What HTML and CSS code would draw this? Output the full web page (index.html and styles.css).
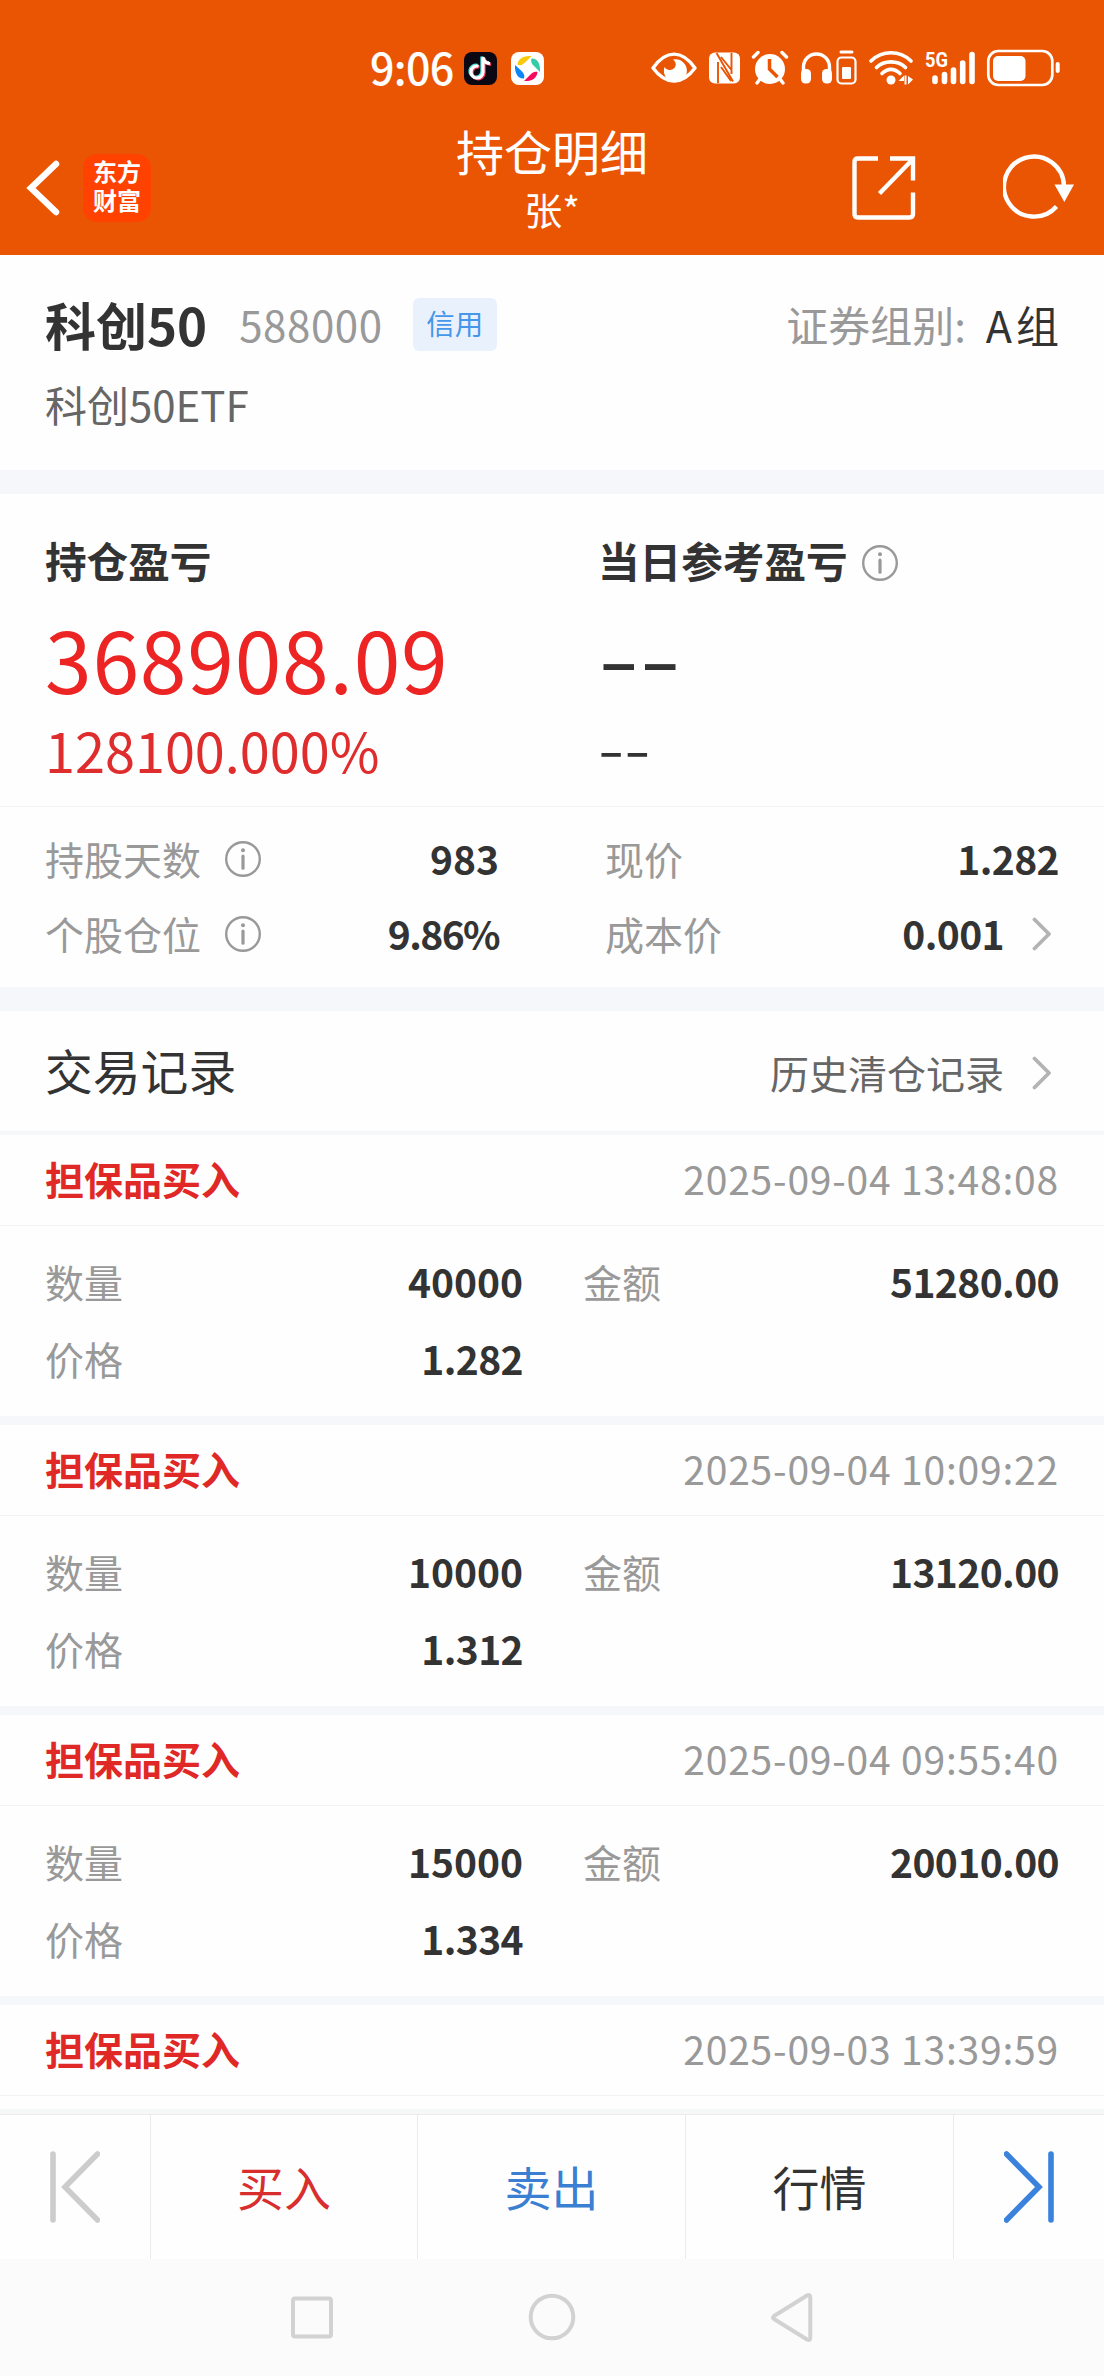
FILE: index.html
```html
<!DOCTYPE html>
<html lang="zh-CN">
<head>
<meta charset="utf-8">
<title>持仓明细</title>
<link rel="stylesheet" href="styles.css">
</head>
<body>
<svg class="defs" width="0" height="0">
  <symbol id="info" viewBox="0 0 36 36">
    <circle cx="18" cy="18" r="16.8" fill="none" stroke="#999" stroke-width="2.4"/>
    <circle cx="18" cy="9.3" r="2" fill="#999"/>
    <path d="M18 15.2V27.2" stroke="#999" stroke-width="3.2" stroke-linecap="round"/>
  </symbol>
  <symbol id="more" viewBox="0 0 20 34">
    <path d="M2.5 2.5L17 17L2.5 31.5" fill="none" stroke="#b3b3b3" stroke-width="3.8" stroke-linecap="round" stroke-linejoin="round"/>
  </symbol>
</svg>
<header class="header">
  <div class="status">
    <span class="clock">9:06</span>
    <svg class="app-icon" viewBox="0 0 33 33">
      <rect width="33" height="33" rx="8" fill="#0b0713"/>
      <g fill="none" stroke-width="3.2">
        <path d="M15 14.200a6 6 0 1 0 4.500 6V5.200c.5 4 3 6 7 6.300" stroke="#4fd9d8" transform="translate(-1.600 -.8)"/>
        <path d="M15 14.200a6 6 0 1 0 4.500 6V5.200c.5 4 3 6 7 6.300" stroke="#ee3a5c" transform="translate(.6 .8)"/>
        <path d="M15 14.200a6 6 0 1 0 4.500 6V5.200c.5 4 3 6 7 6.300" stroke="#fff" transform="translate(-.5 0)"/>
      </g>
    </svg>
    <svg class="app-icon app-icon-last" viewBox="0 0 33 33">
      <rect width="33" height="33" rx="8" fill="#fff"/>
      <path d="M6.500 12.500C7 7 12 3.200 20.500 4.200L14.500 10C12 13 9 14 6.500 12.500z" fill="#fbc90c"/>
      <path d="M20.500 6.500C26 6 29.500 11 29 20L23 14C20.500 11.500 19.500 9.500 20.500 6.500z" fill="#35cca8"/>
      <path d="M26.500 20C26 26 21 29.500 13 29L18.500 23.500C21 20.500 24 19 26.500 20z" fill="#f50a5e"/>
      <path d="M4 13L9.500 18C13 21 14 23.500 13 26.500C7 27 3.500 21.500 4 13z" fill="#0a86f8"/>
    </svg>
    <svg class="status-icons" viewBox="0 0 412 40" fill="none" stroke="#fff">
      <path d="M3 20C16 1.500 32 1.500 45 20C32 37.500 16 37.500 3 20z" stroke-width="3.4" stroke-linejoin="round"/>
      <path d="M23 11.500A11.500 11.500 0 1 1 14.500 19C17 23.500 24 22.500 25.500 18C26.500 15.500 25 13 23 11.500z" fill="#fff" stroke="none"/>
      <rect x="59" y="4.500" width="31" height="31" rx="6" fill="#fff" stroke="none"/>
      <path d="M68 14V35M66.500 5L83 33.500M81.500 5V26M71 19L81 33M71 9L81.500 22" stroke="#ea5504" stroke-width="1.900"/>
      <circle cx="120" cy="21" r="15" fill="#fff" stroke="none"/>
      <path d="M103.500 9L108 4.500M136.500 9L132 4.500M107 35L110 31M133 35L130 31" stroke-width="3.400" stroke-linecap="round"/>
      <path d="M119.500 11V21L127.500 29" stroke="#ea5504" stroke-width="3.500"/>
      <path d="M153.500 27V19A13 13 0 0 1 179.500 19V27" stroke-width="3.400"/>
      <rect x="151" y="21" width="10" height="14.500" rx="4.500" fill="#fff" stroke="none"/>
      <rect x="172" y="21" width="10" height="14.500" rx="4.500" fill="#fff" stroke="none"/>
      <rect x="187.500" y="9.500" width="18" height="26" rx="4" stroke-width="2.200"/>
      <path d="M191 4H202" stroke-width="3" stroke-linecap="round"/>
      <rect x="192" y="19" width="9" height="12" rx="1" fill="#fff" stroke="none"/>
      <path d="M221 13C232 2 250 2 261 13M226.500 19.500C234 12 248 12 255.500 19.500M232 25.500C237.500 20 244.500 20 250 25.500" stroke-width="3.700" stroke-linecap="round"/>
      <circle cx="241" cy="32" r="4.500" fill="#fff" stroke="none"/>
      <path d="M254 27.500L248.500 33H254zM258 36.500V28L263 31.500z" fill="#fff" stroke="none"/>
      <path d="M255.500 27.500V36.500" stroke-width="2"/>
      <text class="net" x="275" y="19" textLength="23" lengthAdjust="spacingAndGlyphs">5G</text>
      <path d="M285 30V33.500M294.500 26.500V33.500M303.500 22V33.500M312.700 15V33.500M322 6.500V33.500" stroke-width="5.600" stroke-linecap="round"/>
      <rect x="338.300" y="3" width="64" height="34" rx="10" stroke-width="2.700"/>
      <rect x="343" y="8" width="32.500" height="25" rx="5" fill="#fff" stroke="none"/>
      <path d="M407.700 16V23" stroke-width="4" stroke-linecap="round"/>
    </svg>
  </div>
  <div class="navbar">
    <svg class="back" viewBox="0 0 34 56"><path d="M30 4L5 28L30 52" fill="none" stroke="#fff" stroke-width="6.500" stroke-linecap="round" stroke-linejoin="miter"/></svg>
    <div class="logo"><span>东方</span><span>财富</span></div>
    <div class="heading"><h1>持仓明细</h1><p>张*</p></div>
    <svg class="share" viewBox="0 0 64 64" fill="none" stroke="#fff" stroke-width="4.400">
      <path d="M26 2.500H6Q2.500 2.500 2.500 6V58Q2.500 61.500 6 61.500H57.500Q61 61.500 61 58V36.500M38 2.500H61V24.500M27.500 37.500L60 4"/>
    </svg>
    <svg class="refresh" viewBox="0 0 72 66">
      <path d="M61 32A30 30 0 1 0 53.500 52.500" fill="none" stroke="#fff" stroke-width="4.400"/>
      <path d="M51.500 30.500H71L61.300 48z" fill="#fff"/>
    </svg>
  </div>
</header>
<main class="content">
  <section class="stock">
    <div class="stock-line">
      <h2>科创50</h2><span class="code">588000</span><span class="tag">信用</span>
      <span class="group-label">证券组别:</span><span class="group">A组</span>
    </div>
    <p class="full-name">科创50ETF</p>
  </section>
  <section class="profit">
    <div class="profit-col">
      <h3>持仓盈亏</h3>
      <p class="amount">368908.09</p>
      <p class="percent">128100.000%</p>
    </div>
    <div class="profit-col">
      <h3>当日参考盈亏<svg class="info"><use href="#info"/></svg></h3>
      <p class="amount none"><span>--</span></p>
      <p class="percent none"><span>--</span></p>
    </div>
  </section>
  <section class="stats">
    <div class="stat"><span>持股天数</span><svg class="info"><use href="#info"/></svg><b>983</b></div>
    <div class="stat"><span>现价</span><b class="decimal">1.282</b></div>
    <div class="stat"><span>个股仓位</span><svg class="info"><use href="#info"/></svg><b class="ratio">9.86%</b></div>
    <div class="stat"><span>成本价</span><b class="decimal">0.001</b><svg class="more"><use href="#more"/></svg></div>
  </section>
  <section class="records-head">
    <h2>交易记录</h2>
    <a class="history">历史清仓记录<svg class="more"><use href="#more"/></svg></a>
  </section>
  <section class="records">
    <article class="record">
      <header><h4>担保品买入</h4><time>2025-09-04 13:48:08</time></header>
      <dl><dt>数量</dt><dd>40000</dd><dt class="second">金额</dt><dd class="decimal">51280.00</dd><dt>价格</dt><dd class="decimal">1.282</dd></dl>
    </article>
    <article class="record">
      <header><h4>担保品买入</h4><time>2025-09-04 10:09:22</time></header>
      <dl><dt>数量</dt><dd>10000</dd><dt class="second">金额</dt><dd class="decimal">13120.00</dd><dt>价格</dt><dd class="decimal">1.312</dd></dl>
    </article>
    <article class="record">
      <header><h4>担保品买入</h4><time>2025-09-04 09:55:40</time></header>
      <dl><dt>数量</dt><dd>15000</dd><dt class="second">金额</dt><dd class="decimal">20010.00</dd><dt>价格</dt><dd class="decimal">1.334</dd></dl>
    </article>
    <article class="record">
      <header><h4>担保品买入</h4><time>2025-09-03 13:39:59</time></header>
    </article>
  </section>
</main>
<footer class="actions">
  <a><svg viewBox="0 0 50 72" fill="none" stroke="#ccc" stroke-width="5.600" stroke-linecap="round"><path d="M3 3V69M47.500 3L15 36L47.500 69"/></svg></a>
  <a class="buy"><span>买入</span></a>
  <a class="sell"><span>卖出</span></a>
  <a><span>行情</span></a>
  <a><svg viewBox="0 0 50 72" fill="none" stroke="#3b82dc" stroke-width="5.600" stroke-linecap="round"><path d="M47 3V69M2.500 3L35 36L2.500 69"/></svg></a>
</footer>
<nav class="system-nav">
  <svg viewBox="0 0 528 52" fill="none" stroke="#d2d2d2" stroke-width="4">
    <rect x="5" y="7.500" width="38" height="38" rx="2"/>
    <circle cx="264" cy="26" r="21.300"/>
    <path d="M486 25Q484 26.500 486 28L519 48.500Q522.300 50 522.300 46.500V6.500Q522.300 3 519 4.500z" stroke-linejoin="round"/>
  </svg>
</nav>
</body>
</html>
```
FILE: styles.css
```css
* { box-sizing: border-box; margin: 0; padding: 0; }

body {
  display: flex;
  flex-direction: column;
  width: 1104px;
  height: 2376px;
  overflow: hidden;
  background: #fefefe;
  color: #333;
  font: 39px/1 "Noto Sans CJK SC", sans-serif;
}

.defs { display: none; }
svg { display: block; flex: none; }

/* Status bar and title */
.header { flex: none; height: 255px; background: #ea5504; color: #fff; }
.status { display: flex; height: 120px; padding: 48px 0 0 370px; }
.clock { width: 94px; margin-top: -2px; font-size: 43px; line-height: 40px; font-weight: 500; letter-spacing: -.7px; }
.app-icon { width: 33px; height: 33px; margin: 4px 14px 0 0; }
.app-icon-last { margin-right: 106px; }
.status-icons { width: 412px; height: 40px; overflow: visible; }
.net { fill: #fff; stroke: none; font: 700 20.500px Roboto, sans-serif; }

.navbar { display: flex; height: 135px; padding-left: 26px; }
.back { width: 34px; height: 56px; margin-top: 40px; }
.logo {
  display: flex;
  flex-direction: column;
  align-items: center;
  width: 68px;
  height: 68px;
  margin: 34px 0 0 23px;
  padding-top: 2px;
  border-radius: 14px;
  background: #ff4200;
  font-size: 24px;
  line-height: 29px;
  font-weight: 700;
}
.heading { flex: none; width: 240px; margin: 3px 0 0 281px; text-align: center; }
.heading h1 { font-size: 48px; line-height: 54px; font-weight: 400; }
.heading p { font-size: 38px; line-height: 64px; }
.share { width: 64px; height: 64px; margin: 36px 0 0 180px; }
.refresh { width: 72px; height: 66px; margin: 34px 0 0 87px; }

/* Instrument */
.content { flex: 1; min-height: 0; overflow: hidden; }
.stock { height: 239px; padding: 31px 45px 0; border-bottom: 24px solid #f6f7fa; }
.stock-line { display: flex; align-items: center; height: 76px; }
.stock h2 { font-size: 51px; font-weight: 700; }
.code { margin-left: 32px; color: #999; font-size: 42px; letter-spacing: .6px; }
.tag {
  width: 84px;
  height: 53px;
  margin-left: 30px;
  border-radius: 6px;
  background: #e9f2fc;
  color: #4696ea;
  font-size: 28.500px;
  line-height: 50px;
  text-align: center;
}
.group-label { margin-left: auto; color: #999; font-size: 42px; }
.group { margin: 0 -4px 0 20px; font-size: 43px; letter-spacing: 4px; }
.full-name { margin-top: 20px; color: #666; font-size: 42px; line-height: 44px; }

/* Profit and loss */
.profit { display: flex; height: 312px; padding: 41px 0 0 45px; }
.profit-col { flex: none; width: 553px; }
.profit h3 { display: flex; align-items: center; height: 52px; font-size: 41.600px; font-weight: 700; }
.profit h3 .info { margin: 3px 0 0 14px; }
.info { width: 36px; height: 36px; }
.amount { margin-top: 21px; color: #ec2524; font-size: 84px; line-height: 100px; letter-spacing: .8px; }
.percent { margin-top: 12px; color: #df2c2c; font-size: 54px; line-height: 60px; }
.none { color: #333; }
.none span { display: inline-block; transform-origin: 0 50%; }
.amount.none span { transform: translateY(-3px) scaleX(1.42); letter-spacing: 0; }
.percent.none span { transform: translateY(-3px) scaleX(1.400); }

/* Position figures */
.stats {
  display: grid;
  grid-template-columns: 454px 454px;
  grid-template-rows: 75px 75px;
  column-gap: 106px;
  height: 205px;
  padding: 14px 45px 0;
  border-top: 1px solid #f3f3f4;
  border-bottom: 24px solid #f6f7fa;
}
.stat { display: flex; align-items: center; color: #999; }
.stat .info { margin: 0 0 0 24px; }
.stat b, .record dd { margin-left: auto; color: #333; font-weight: 700; }
.stat .decimal, .record .decimal { letter-spacing: -.6px; }
.stat .ratio { letter-spacing: -1.600px; }
.more { width: 20px; height: 34px; margin: 0 7px 0 28px; }

/* Trade records */
.records-head {
  display: flex;
  align-items: center;
  justify-content: space-between;
  height: 124px;
  padding: 0 45px;
  border-bottom: 4px solid #f6f7f9;
}
.records-head h2 { padding-bottom: 3px; font-size: 47.800px; font-weight: 400; }
.history { display: flex; align-items: center; padding-top: 3px; color: #666; }
.record { height: 290px; border-bottom: 9px solid #f6f7fa; }
.record header {
  display: flex;
  align-items: center;
  justify-content: space-between;
  height: 91px;
  padding: 0 45px 3px;
  border-bottom: 1px solid #f3f3f5;
}
.record h4 { color: #e02827; font-size: 39px; font-weight: 700; }
.record time { color: #999; letter-spacing: .8px; }
.record dl {
  display: grid;
  grid-template-columns: 80px 398px 139px 397px;
  grid-template-rows: 77px 77px;
  align-items: center;
  padding: 17px 45px 0;
}
.record dt { color: #999; }
.record .second { padding-left: 60px; }
.record dd { text-align: right; }

/* Bottom actions */
.actions {
  display: grid;
  grid-template-columns: 151px 267px 268px 268px 150px;
  flex: none;
  height: 150px;
  border-top: 5px solid #f6f8f8;
  box-shadow: inset 0 1px #ececec;
}
.actions a {
  display: flex;
  align-items: center;
  justify-content: center;
  border-right: 1px solid #ebebeb;
  font-size: 47px;
}
.actions a:last-child { border: 0; }
.actions span { padding-bottom: 3px; }
.actions svg { width: 50px; height: 72px; }
.actions .buy { color: #d92e2e; }
.actions .sell { color: #3b7fd2; }

.system-nav { flex: none; height: 117px; padding: 32px 0 0 288px; background: #fbfbfb; }
.system-nav svg { width: 528px; height: 52px; }
```
